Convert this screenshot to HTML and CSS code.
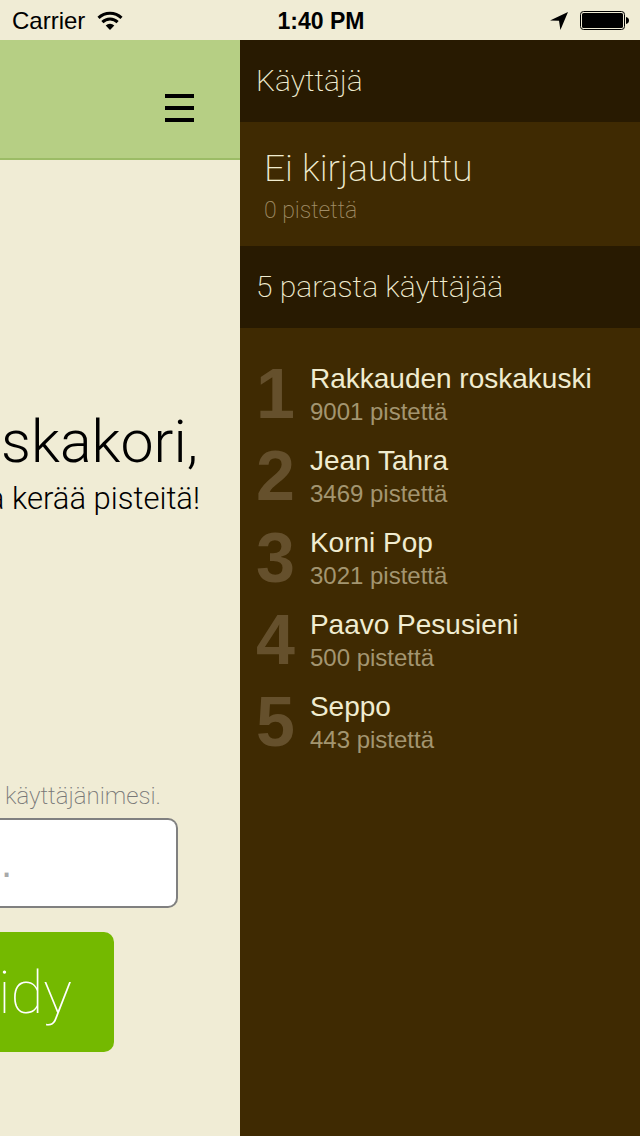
FILE: index.html
```html
<!DOCTYPE html>
<html lang="fi">
<head>
<meta charset="utf-8">
<meta name="viewport" content="width=device-width, initial-scale=1">
<title>Käyttäjä</title>
<link rel="stylesheet" href="styles.css">
</head>
<body>
<div class="status">
  <div class="status-left">
    <span>Carrier</span>
    <svg width="26" height="20" viewBox="0 0 26 20" aria-hidden="true"><g fill="none" stroke="#000" stroke-width="3"><path d="M1.5 6.8 A16.5 16.5 0 0 1 24.5 6.8"/><path d="M5.4 11.1 A10.8 10.8 0 0 1 20.6 11.1"/></g><path d="M8.7 14.4 A6.2 6.2 0 0 1 17.3 14.4 L13 19 Z"/></svg>
  </div>
  <div class="status-time">1:40 PM</div>
  <div class="status-right">
    <svg width="20" height="20" viewBox="0 0 20 20" aria-hidden="true"><path d="M19 1 L1 9.6 L10 9.8 L11.4 19 Z"/></svg>
    <svg width="50" height="20" viewBox="0 0 50 20" aria-hidden="true"><rect x=".5" y=".5" width="44" height="18" rx="3" fill="none" stroke="#000" stroke-width="1"/><rect x="2" y="2" width="41" height="15" rx="1.6"/><path d="M46 6 Q49 6.6 49 9.5 Q49 12.4 46 13 Z"/></svg>
  </div>
</div>
<div class="screen">
  <main class="page">
    <header class="topbar">
      <button class="menu" type="button" aria-label="Valikko">
        <svg width="30" height="28" viewBox="0 0 30 28"><path d="M0 0h29v4H0zM0 12h29v4H0zM0 24h29v4H0z"/></svg>
      </button>
    </header>
    <div class="intro">
      <h1>skakori,</h1>
      <p>a kerää pisteitä!</p>
    </div>
    <form class="form">
      <label for="name">käyttäjänimesi.</label>
      <input id="name" type="text" placeholder=".">
      <button class="submit" type="button">öidy</button>
    </form>
  </main>
  <aside class="drawer">
    <h2>Käyttäjä</h2>
    <div class="user">
      <div class="user-name">Ei kirjauduttu</div>
      <div class="user-points">0 pistettä</div>
    </div>
    <h2>5 parasta käyttäjää</h2>
    <ol class="top">
      <li><b>1</b><div><div class="name">Rakkauden roskakuski</div><div class="points">9001 pistettä</div></div></li>
      <li><b>2</b><div><div class="name">Jean Tahra</div><div class="points">3469 pistettä</div></div></li>
      <li><b>3</b><div><div class="name">Korni Pop</div><div class="points">3021 pistettä</div></div></li>
      <li><b>4</b><div><div class="name">Paavo Pesusieni</div><div class="points">500 pistettä</div></div></li>
      <li><b>5</b><div><div class="name">Seppo</div><div class="points">443 pistettä</div></div></li>
    </ol>
  </aside>
</div>
</body>
</html>
```
FILE: styles.css
```css
* { box-sizing: border-box; }
body, h1, h2, p, ol { margin: 0; padding: 0; }
body {
  min-height: 100vh;
  display: flex;
  flex-direction: column;
  background: #f0ecd5;
  color: #000;
  font-family: "Liberation Sans", Arial, sans-serif;
  overflow-x: hidden;
}
.status {
  height: 40px;
  display: grid;
  grid-template-columns: 1fr auto 1fr;
  align-items: center;
  padding: 2px 10px 0 12px;
  font-size: 24px;
  line-height: 38px;
}
.status-left, .status-right { display: flex; align-items: center; gap: 12px; }
.status-right { justify-content: flex-end; gap: 11px; }
.status-time { font-weight: bold; font-size: 23px; }
.screen { flex: 1; display: grid; grid-template-columns: 3fr 5fr; }
.page {
  min-width: 0;
  overflow: hidden;
  white-space: nowrap;
  font-family: Roboto, sans-serif;
}
.topbar {
  height: 120px;
  display: flex;
  justify-content: flex-end;
  align-items: flex-end;
  padding: 0 45px 36px 0;
  background: #b6cf84;
  border-bottom: 2px solid #9cbc66;
}
.menu { display: flex; padding: 0; border: 0; background: none; }
.intro {
  display: flex;
  flex-direction: column;
  align-items: flex-end;
  padding: 244px 40px 0 0;
}
h1 { margin-right: 2px; font-size: 59px; line-height: 76px; font-weight: 300; }
.intro p { font-size: 31px; line-height: 38px; font-weight: 300; }
.form {
  display: flex;
  flex-direction: column;
  align-items: flex-end;
  padding-top: 262px;
}
.form label {
  margin-right: 79px;
  font-size: 24px;
  line-height: 32px;
  font-weight: 200;
  color: #777;
}
.form input {
  width: calc(100% - 62px);
  height: 90px;
  margin: 6px 62px 24px 0;
  padding: 0 0 0 1px;
  border: 2px solid #808080;
  border-left: 0;
  border-radius: 0 10px 10px 0;
  background: #fff;
  font: 40px "Liberation Sans", Arial, sans-serif;
}
.form input::placeholder { color: #a9a9a9; opacity: 1; }
.submit {
  width: calc(100% - 126px);
  height: 120px;
  margin-right: 126px;
  padding: 0 42px 0 0;
  display: flex;
  justify-content: flex-end;
  align-items: center;
  overflow: hidden;
  border: 0;
  border-radius: 0 10px 10px 0;
  background: #74b900;
  color: #fff;
  font: 100 60px Roboto, sans-serif;
}
.drawer { min-width: 0; background: #3f2a02; color: #f0ecd0; }
h2 {
  padding: 0 16px;
  background: #281a01;
  font: 200 30px/82px Roboto, sans-serif;
}
.user { padding: 23px 24px 17px; font-family: Roboto, sans-serif; font-weight: 200; }
.user-name { font-size: 37px; line-height: 48px; }
.user-points { font-size: 23px; line-height: 36px; color: #a08d66; }
.top { list-style: none; padding: 32px 16px; }
.top li { display: flex; gap: 15px; height: 82px; }
.top b { font-size: 70px; line-height: 68px; color: #65502c; }
.name { font-size: 28px; line-height: 38px; }
.points { font-size: 24px; line-height: 28px; color: #a39570; }
```
